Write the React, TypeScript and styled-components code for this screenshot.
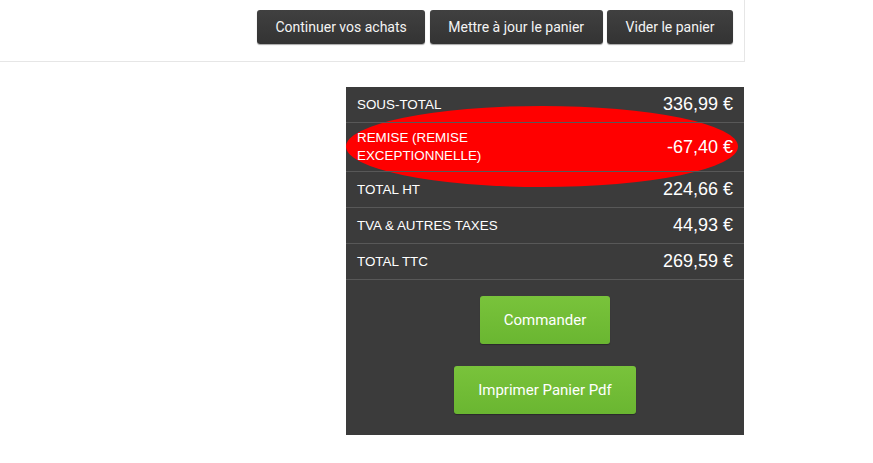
import React from "react";
import styled, { createGlobalStyle } from "styled-components";

const Global = createGlobalStyle`
  html, body { margin: 0; padding: 0; background: #ffffff; }
  body { font-family: "Liberation Sans", Arial, sans-serif; }
`;

const Page = styled.div`
  width: 745px;
  display: flex;
  flex-direction: column;
`;

const ActionsBox = styled.div`
  display: flex;
  justify-content: flex-end;
  gap: 4.5px;
  padding: 10px 11px 17px 0;
  border-right: 1px solid #e6e6e6;
  border-bottom: 1px solid #e6e6e6;
`;

const DarkButton = styled.button<{ $px: number }>`
  height: 34px;
  padding: 0 ${(p) => p.$px}px;
  border: none;
  border-radius: 3px;
  background: linear-gradient(#404040, #333333);
  box-shadow: 0 1px 1px rgba(0, 0, 0, 0.35);
  color: #f4f4f4;
  font-family: Roboto, "Liberation Sans", sans-serif;
  font-size: 14px;
  cursor: pointer;
`;

const Panel = styled.div`
  position: relative;
  align-self: flex-end;
  margin: 25px 1px 0 0;
  width: 398px;
  background: #3b3b3b;
  display: flex;
  flex-direction: column;
  padding-bottom: 21px;
`;

const Ellipse = styled.div`
  position: absolute;
  left: 0;
  top: 19px;
  width: 392px;
  height: 81px;
  border-radius: 50%;
  background: #ff0000;
`;

const Row = styled.div<{ $h: number }>`
  position: relative;
  height: ${(p) => p.$h}px;
  display: flex;
  align-items: center;
  justify-content: space-between;
  padding: 0 11px;
  border-bottom: 1px solid #585858;
  color: #ffffff;
`;

const Label = styled.span`
  font-size: 13.4px;
  line-height: 18px;
  text-transform: uppercase;
`;

const Value = styled.span`
  font-size: 18px;
`;

const GreenButtons = styled.div`
  display: flex;
  flex-direction: column;
  align-items: center;
  gap: 22px;
  padding-top: 16px;
`;

const GreenButton = styled.button`
  height: 48px;
  padding: 0 24px;
  border: none;
  border-radius: 3px;
  background: linear-gradient(#79c33b, #6ab631);
  box-shadow: 0 1px 1px rgba(0, 0, 0, 0.3);
  color: #ffffff;
  font-family: Roboto, "Liberation Sans", sans-serif;
  font-size: 15px;
  cursor: pointer;
`;

const rows = [
  { label: "Sous-total", value: "336,99 €", h: 35 },
  { label: "Remise (Remise\nexceptionnelle)", value: "-67,40 €", h: 48 },
  { label: "Total HT", value: "224,66 €", h: 35 },
  { label: "TVA & autres taxes", value: "44,93 €", h: 35 },
  { label: "Total TTC", value: "269,59 €", h: 35 },
];

export default function App() {
  return (
    <Page>
      <Global />
      <ActionsBox>
        <DarkButton $px={18.5}>Continuer vos achats</DarkButton>
        <DarkButton $px={18.5}>Mettre à jour le panier</DarkButton>
        <DarkButton $px={18.5}>Vider le panier</DarkButton>
      </ActionsBox>
      <Panel>
        <Ellipse />
        {rows.map((r) => (
          <Row key={r.label} $h={r.h}>
            <Label>
              {r.label.split("\n").map((l, i) => (
                <React.Fragment key={i}>
                  {i > 0 && <br />}
                  {l}
                </React.Fragment>
              ))}
            </Label>
            <Value>{r.value}</Value>
          </Row>
        ))}
        <GreenButtons>
          <GreenButton>Commander</GreenButton>
          <GreenButton>Imprimer Panier Pdf</GreenButton>
        </GreenButtons>
      </Panel>
    </Page>
  );
}
